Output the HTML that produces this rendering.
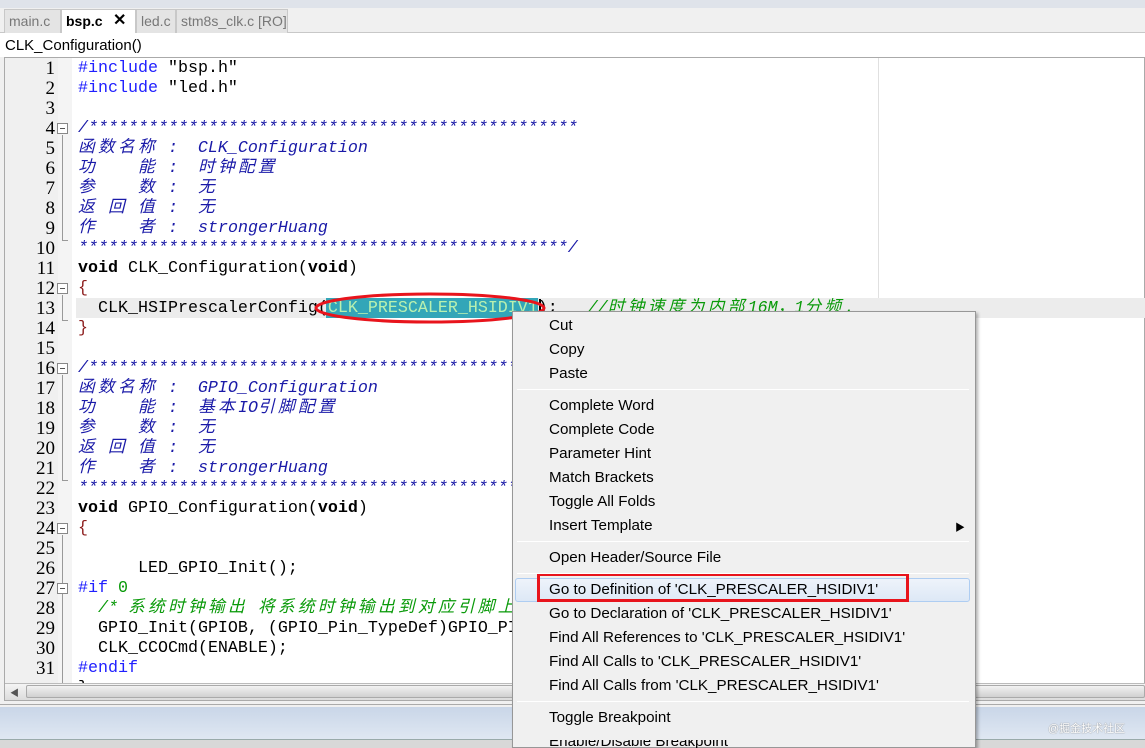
<!DOCTYPE html>
<html><head><meta charset="utf-8"><style>
*{margin:0;padding:0;box-sizing:border-box}
body{width:1145px;height:748px;overflow:hidden;background:#f0f0f0;position:relative;font-family:"Liberation Sans","Noto Sans CJK SC",sans-serif}
.abs{position:absolute}
.tab{position:absolute;top:9px;height:24px;font-size:14px;line-height:22px;color:#777;background:#e4e4e4;border:1px solid #c8c8c8;border-bottom:none;padding-left:4px;white-space:nowrap;overflow:hidden}
.code{position:absolute;left:78px;font-family:"Liberation Mono","Noto Sans CJK SC",monospace;font-size:16.67px;line-height:20px;white-space:pre;color:#000}
.ln{position:absolute;width:50px;left:5px;text-align:right;font-family:"Liberation Serif",serif;font-size:19px;line-height:20px;color:#000}
.k{color:#2020ff}.cm{color:#1a1aa8;font-style:italic}.g{color:#0a9a0a;font-style:italic}.b{font-weight:bold}.br{color:#8b1a1a}
.z{letter-spacing:3.33px}
.fold{position:absolute;left:57px;width:11px;height:11px;border:1px solid #888;background:#fff}
.fold:after{content:"";position:absolute;left:2px;top:4px;width:5px;height:1px;background:#555}
.vl{position:absolute;left:62px;width:1px;background:#999}
.mi{position:absolute;left:549px;font-size:15.2px;line-height:20px;color:#000}
.sep{position:absolute;left:517px;width:452px;height:1px;background:#d7d7d7;border-bottom:1px solid #fff}
</style></head><body>
<div class="abs" style="left:0;top:0;width:1145px;height:8px;background:#dfe3ea"></div>
<div class="abs" style="left:0;top:32px;width:1145px;height:1px;background:#c8c8c8"></div>
<div class="tab" style="left:4px;width:57px">main.c</div>
<div class="tab" style="left:61px;width:75px;background:#fff;color:#000;font-weight:bold;height:25px">bsp.c <span style="position:absolute;left:51px;font-weight:bold;font-size:16px">✕</span></div>
<div class="tab" style="left:136px;width:40px">led.c</div>
<div class="tab" style="left:176px;width:112px">stm8s_clk.c [RO]</div>
<div class="abs" style="left:0;top:33px;width:1145px;height:24px;background:#fff"></div>
<div class="abs" style="left:5px;top:36px;font-size:15px;line-height:20px">CLK_Configuration()</div>
<div class="abs" style="left:4px;top:57px;width:1141px;height:644px;background:#fff;border:1px solid #aaa"></div>
<div class="abs" style="left:5px;top:58px;width:53px;height:625px;background:#f0f0f0"></div>
<div class="abs" style="left:58px;top:58px;width:14px;height:625px;background:#f4f4f4"></div>
<div class="abs" style="left:878px;top:58px;width:1px;height:625px;background:#e0e0e0"></div>
<div class="abs" style="left:76px;top:298px;width:1069px;height:20px;background:#ececec"></div>
<div class="abs" style="left:326px;top:298px;width:212px;height:20px;background:#33a6b8"></div>
<div class="abs" style="left:539px;top:299px;width:2px;height:18px;background:#000"></div>
<div class="vl" style="top:135px;height:105px"></div><div class="abs" style="left:62px;top:240px;width:6px;height:1px;background:#999"></div>
<div class="vl" style="top:295px;height:25px"></div><div class="abs" style="left:62px;top:320px;width:6px;height:1px;background:#999"></div>
<div class="vl" style="top:375px;height:105px"></div><div class="abs" style="left:62px;top:480px;width:6px;height:1px;background:#999"></div>
<div class="vl" style="top:535px;height:148px"></div>
<div class="fold" style="top:123px"></div><div class="fold" style="top:283px"></div><div class="fold" style="top:363px"></div><div class="fold" style="top:523px"></div><div class="fold" style="top:583px"></div>
<div class="ln" style="top:59px">1<br>2<br>3<br>4<br>5<br>6<br>7<br>8<br>9<br>10<br>11<br>12<br>13<br>14<br>15<br>16<br>17<br>18<br>19<br>20<br>21<br>22<br>23<br>24<br>25<br>26<br>27<br>28<br>29<br>30<br>31</div>
<div class="code" style="top:59px;height:624px;overflow:hidden;width:1060px"><span class="k">#include</span> "bsp.h"
<span class="k">#include</span> "led.h"

<span class="cm">/*************************************************</span>
<span class="cm"><span class="z">函数名称</span> :  CLK_Configuration</span>
<span class="cm"><span class="z">功</span>    <span class="z">能</span> :  <span class="z">时钟配置</span></span>
<span class="cm"><span class="z">参</span>    <span class="z">数</span> :  <span class="z">无</span></span>
<span class="cm"><span class="z">返</span> <span class="z">回</span> <span class="z">值</span> :  <span class="z">无</span></span>
<span class="cm"><span class="z">作</span>    <span class="z">者</span> :  strongerHuang</span>
<span class="cm">*************************************************/</span>
<span class="b">void</span> CLK_Configuration(<span class="b">void</span>)
<span class="br">{</span>
  CLK_HSIPrescalerConfig(<span style="color:#b8f0b0">CLK_PRESCALER_HSIDIV1</span>);   <span class="g">//<span class="z">时钟速度为内部</span>16M，1<span class="z">分频</span>.</span>
<span class="br">}</span>

<span class="cm">/*************************************************</span>
<span class="cm"><span class="z">函数名称</span> :  GPIO_Configuration</span>
<span class="cm"><span class="z">功</span>    <span class="z">能</span> :  <span class="z">基本</span>IO<span class="z">引脚配置</span></span>
<span class="cm"><span class="z">参</span>    <span class="z">数</span> :  <span class="z">无</span></span>
<span class="cm"><span class="z">返</span> <span class="z">回</span> <span class="z">值</span> :  <span class="z">无</span></span>
<span class="cm"><span class="z">作</span>    <span class="z">者</span> :  strongerHuang</span>
<span class="cm">*************************************************/</span>
<span class="b">void</span> GPIO_Configuration(<span class="b">void</span>)
<span class="br">{</span>

      LED_GPIO_Init();
<span class="k">#if</span> <span style="color:#0a9a0a">0</span>
  <span class="g">/* <span class="z">系统时钟输出</span> <span class="z">将系统时钟输出到对应引脚上</span></span>
  GPIO_Init(GPIOB, (GPIO_Pin_TypeDef)GPIO_PIN_0, GPIO_MODE_OUT_PP_HIGH_FAST);
  CLK_CCOCmd(ENABLE);
<span class="k">#endif</span>
}</div>
<svg class="abs" style="left:0;top:0" width="1145" height="748"><ellipse cx="430" cy="308" rx="114" ry="14" fill="none" stroke="#e8141c" stroke-width="3"/></svg>
<div class="abs" style="left:5px;top:683px;width:1140px;height:17px;background:linear-gradient(#f4f4f4,#dcdcdc);border-top:1px solid #bbb"></div>
<div class="abs" style="left:10px;top:686px;font-size:9px;color:#555">◀</div>
<div class="abs" style="left:26px;top:685px;width:1119px;height:13px;background:linear-gradient(#f2f2f2,#d0d0d0);border:1px solid #aaa;border-radius:2px"></div>
<div class="abs" style="left:0;top:701px;width:1145px;height:4px;background:#f0f0f0;border-bottom:1px solid #aaa"></div>
<div class="abs" style="left:0;top:707px;width:1145px;height:32px;background:linear-gradient(#c9d6e8,#dfe7f2)"></div>
<div class="abs" style="left:0;top:739px;width:1145px;height:9px;background:#d8d8d8;border-top:1px solid #9aa"></div>
<div class="abs" style="left:1048px;top:720px;font-size:11px;color:#fff;text-shadow:0 0 1px #666">@掘金技术社区</div>
<div class="abs" style="left:512px;top:311px;width:464px;height:437px;background:#f0f0f0;border:1px solid #979797;box-shadow:2px 2px 3px rgba(0,0,0,.3)"></div>
<div class="abs" style="left:515px;top:578px;width:455px;height:24px;background:linear-gradient(#eef3fa,#dde8f6);border:1px solid #aecdf2;border-radius:3px"></div>
<div class="abs" style="left:537px;top:573px;width:372px;height:29px;border:3px solid #e8141c"></div>
<div class="sep" style="top:389px"></div><div class="sep" style="top:541px"></div><div class="sep" style="top:573px"></div><div class="sep" style="top:701px"></div>
<div class="mi" style="top:316px">Cut</div>
<div class="mi" style="top:340px">Copy</div>
<div class="mi" style="top:364px">Paste</div>
<div class="mi" style="top:396px">Complete Word</div>
<div class="mi" style="top:420px">Complete Code</div>
<div class="mi" style="top:444px">Parameter Hint</div>
<div class="mi" style="top:468px">Match Brackets</div>
<div class="mi" style="top:492px">Toggle All Folds</div>
<div class="mi" style="top:516px">Insert Template</div>
<div class="abs" style="left:955px;top:519px;font-size:10px">▶</div>
<div class="mi" style="top:548px">Open Header/Source File</div>
<div class="mi" style="top:580px">Go to Definition of 'CLK_PRESCALER_HSIDIV1'</div>
<div class="mi" style="top:604px">Go to Declaration of 'CLK_PRESCALER_HSIDIV1'</div>
<div class="mi" style="top:628px">Find All References to 'CLK_PRESCALER_HSIDIV1'</div>
<div class="mi" style="top:652px">Find All Calls to 'CLK_PRESCALER_HSIDIV1'</div>
<div class="mi" style="top:676px">Find All Calls from 'CLK_PRESCALER_HSIDIV1'</div>
<div class="mi" style="top:708px">Toggle Breakpoint</div>
<div class="abs" style="left:513px;top:740px;width:462px;height:8px;overflow:hidden"><div class="mi" style="left:36px;top:-8px">Enable/Disable Breakpoint</div></div>
</body></html>
